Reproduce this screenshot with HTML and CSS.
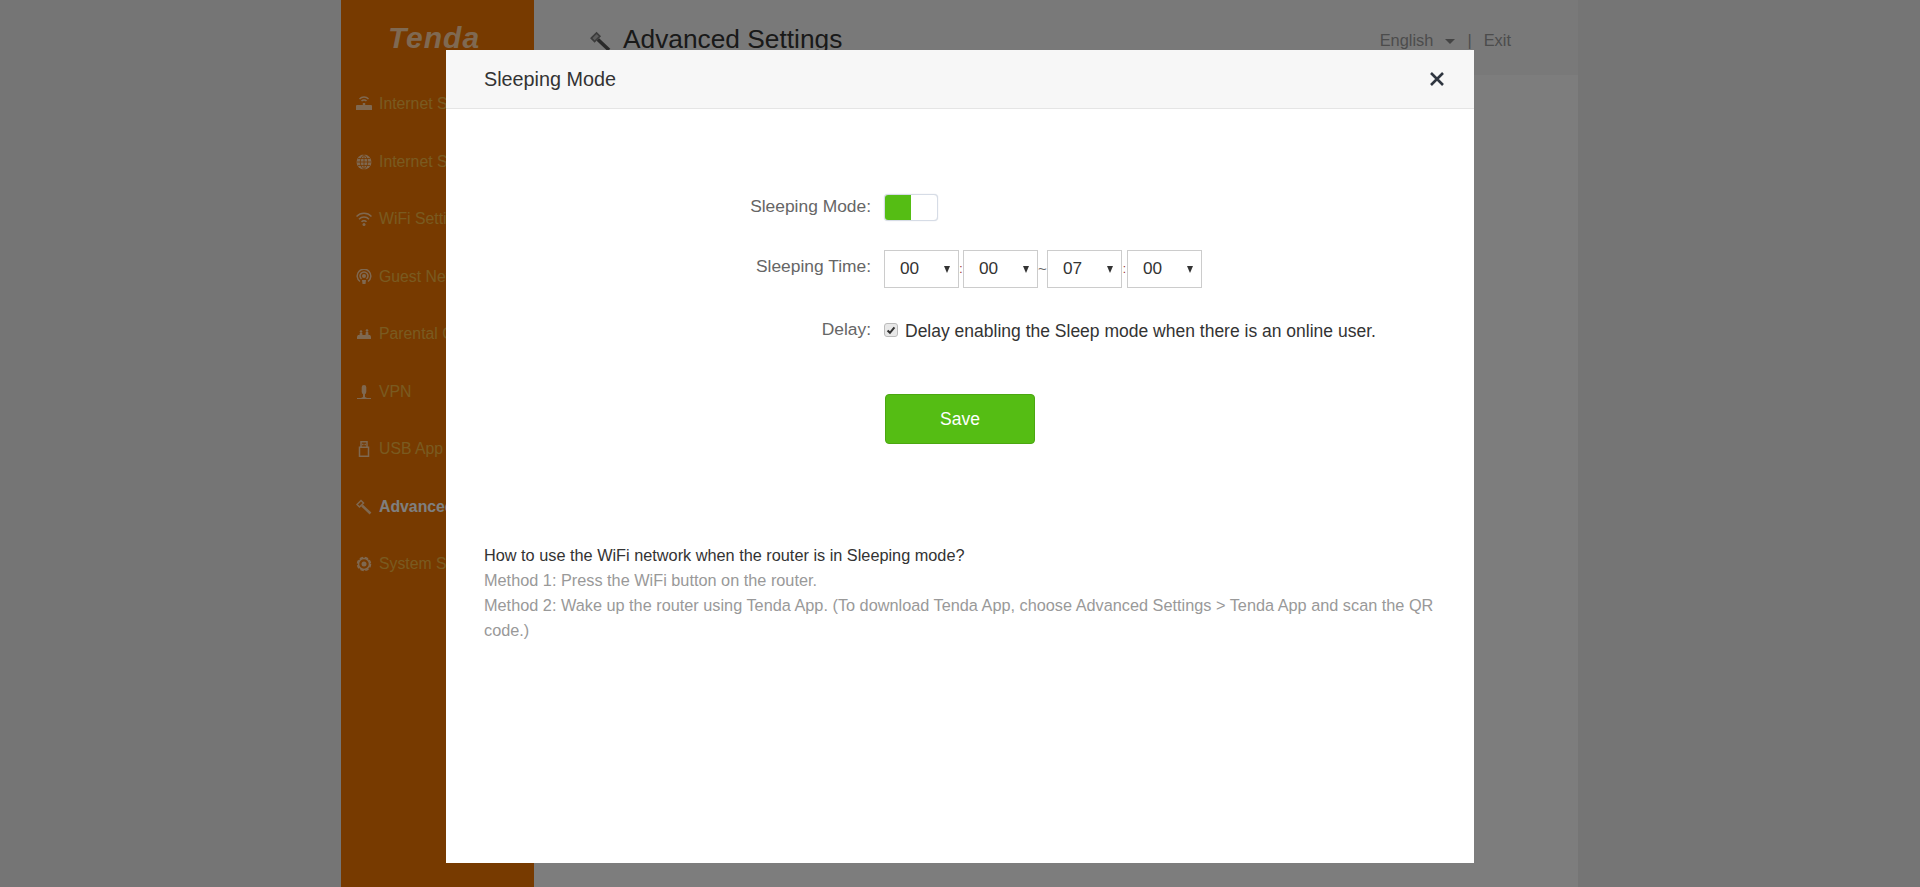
FILE: index.html
```html
<!DOCTYPE html>
<html lang="en">
<head>
  <meta charset="UTF-8">
  <title>Advanced Settings</title>
  <link rel="stylesheet" href="styles.css">
</head>
<body>

  <div class="page">
    <aside class="sidebar">
      <div class="logo">Tenda</div>
      <nav class="menu">
        <a class="menu-item">
          <svg class="menu-icon" viewBox="0 0 16 16"><path d="M1 9h5.800V7h2.400v2H15a1 1 0 0 1 1 1v4H0v-4a1 1 0 0 1 1-1z"/><path class="line" d="M5.500 5a3.500 3.500 0 0 1 5 0M3.500 3a6.300 6.300 0 0 1 9 0"/></svg>
          <span>Internet Status</span>
        </a>
        <a class="menu-item">
          <svg class="menu-icon" viewBox="0 0 16 16"><circle cx="8" cy="8" r="7.500"/><path class="cut" d="M.5 8h15M2 4.500h12M2 11.500h12M8 .5v15M8 .5c-5 4-5 11 0 15M8 .5c5 4 5 11 0 15"/></svg>
          <span>Internet Settings</span>
        </a>
        <a class="menu-item">
          <svg class="menu-icon" viewBox="0 0 16 16"><path class="line" d="M.5 5.500a10.500 10.500 0 0 1 15 0M3 8.200a7 7 0 0 1 10 0M5.500 10.800a3.500 3.500 0 0 1 5 0"/><circle cx="8" cy="13.500" r="1.500"/></svg>
          <span>WiFi Settings</span>
        </a>
        <a class="menu-item">
          <svg class="menu-icon" viewBox="0 0 16 16"><path class="line" d="M4 12.500a6.800 6.800 0 1 1 8 0M5.500 10a4 4 0 1 1 5 0"/><circle cx="8" cy="7" r="2"/><path d="M6 11h4l-.5 4h-3z"/></svg>
          <span>Guest Network</span>
        </a>
        <a class="menu-item">
          <svg class="menu-icon" viewBox="0 0 16 16"><path d="M2 9h12l1 1.500V13H1v-2.500z"/><circle cx="5" cy="5.500" r="1.300"/><circle cx="11" cy="4.500" r="1.300"/><path d="M3.500 9l.3-2h2.400l.3 2zM9.500 9l.3-3h2.400l.3 3z"/></svg>
          <span>Parental Control</span>
        </a>
        <a class="menu-item">
          <svg class="menu-icon" viewBox="0 0 16 16"><path d="M8 1a2.300 2.300 0 0 1 2.300 2.300V8a2.300 2.300 0 0 1-4.600 0V3.300A2.300 2.300 0 0 1 8 1zM7 10h2v3l2 1H5l2-1z"/><path d="M1 14h14v1H1z"/></svg>
          <span>VPN</span>
        </a>
        <a class="menu-item">
          <svg class="menu-icon" viewBox="0 0 16 16"><path class="line" d="M5 .8h6v5.500H5zM3.500 6.300h9v9h-9zM6.800 2.800v1.500M9.200 2.800v1.500"/></svg>
          <span>USB App</span>
        </a>
        <a class="menu-item is-active">
          <svg class="menu-icon" viewBox="0 0 16 16"><path class="line" d="M1 5.500L5 1.500l2.500 2.500-4 4z"/><path class="line-thick" d="M6 6.500l8.500 8"/></svg>
          <span>Advanced Settings</span>
        </a>
        <a class="menu-item">
          <svg class="menu-icon" viewBox="0 0 16 16"><circle class="line" cx="8" cy="8" r="6.500" stroke-dasharray="3.500 1.600"/><circle class="line" cx="8" cy="8" r="5.500"/><circle cx="8" cy="8" r="2.500"/></svg>
          <span>System Settings</span>
        </a>
      </nav>
    </aside>

    <main class="content">
      <header class="topbar">
        <h1 class="page-title">
          <svg class="title-icon" viewBox="0 0 16 16"><path class="head" d="M1 5.500L5 1.500l2.500 2.500-4 4z"/><path class="handle" d="M6 6.500l8.500 8"/></svg>
          Advanced Settings
        </h1>
        <div class="top-links">
          <span>English</span>
          <span class="caret"></span>
          <span class="divider">|</span>
          <span>Exit</span>
        </div>
      </header>
    </main>
  </div>

  <div class="scrim"></div>

  <section class="modal">
    <header class="modal-head">
      <h2 class="modal-title">Sleeping Mode</h2>
      <svg class="modal-close" viewBox="0 0 16 16"><path d="M2 2l12 12M14 2L2 14"/></svg>
    </header>

    <div class="modal-body">
      <form class="sleep-form">
        <div class="form-row row-toggle">
          <label class="form-label">Sleeping Mode:</label>
          <div class="toggle"><span class="toggle-on"></span><span class="toggle-off"></span></div>
        </div>

        <div class="form-row row-time">
          <label class="form-label">Sleeping Time:</label>
          <div class="time-fields">
            <div class="select-box"><select><option>00</option></select></div>
            <span class="sep sep-colon">:</span>
            <div class="select-box"><select><option>00</option></select></div>
            <span class="sep sep-tilde">~</span>
            <div class="select-box"><select><option>07</option></select></div>
            <span class="sep sep-colon">:</span>
            <div class="select-box"><select><option>00</option></select></div>
          </div>
        </div>

        <div class="form-row row-delay">
          <label class="form-label">Delay:</label>
          <label class="check-label">
            <span class="check">
              <svg viewBox="0 0 14 14"><path d="M3 7.500l2.800 2.800L11 4"/></svg>
            </span>
            <span class="check-text">Delay enabling the Sleep mode when there is an online user.</span>
          </label>
        </div>

        <div class="form-row row-save">
          <button class="btn-save" type="button">Save</button>
        </div>
      </form>

      <div class="help">
        <p class="help-title">How to use the WiFi network when the router is in Sleeping mode?</p>
        <p>Method 1: Press the WiFi button on the router.</p>
        <p>Method 2: Wake up the router using Tenda App. (To download Tenda App, choose Advanced Settings &gt; Tenda App and scan the QR code.)</p>
      </div>
    </div>
  </section>

</body>
</html>
```

FILE: styles.css
```css
html, body {
  margin: 0;
  padding: 0;
  height: 100%;
  overflow: hidden;
}

body {
  font-family: "Liberation Sans", Arial, sans-serif;
  background-color: #eaeaea;
  color: #333;
}

h1, h2, p {
  margin: 0;
  font-weight: normal;
}

/* page behind the dialog */
.page {
  display: flex;
  width: 1237px;
  height: 100%;
  margin-left: 341px;
}

.sidebar {
  width: 193px;
  flex-shrink: 0;
  background-color: #ee7400;
}

.logo {
  height: 75.500px;
  padding: 23px 7px 0 0;
  box-sizing: border-box;
  text-align: center;
  font-size: 30px;
  line-height: 30px;
  font-weight: bold;
  font-style: italic;
  letter-spacing: 1px;
  color: #ffd2a4;
}

.menu {
  display: flex;
  flex-direction: column;
}

.menu-item {
  display: flex;
  align-items: center;
  height: 57.500px;
  padding-left: 15px;
  font-size: 15.800px;
  color: #f4b440;
  white-space: nowrap;
}

.menu-item.is-active {
  font-weight: bold;
  color: #fff;
}

.menu-icon {
  width: 16px;
  height: 16px;
  margin-right: 7px;
  fill: #ffd0a0;
}

.menu-icon .line {
  fill: none;
  stroke: #ffd0a0;
  stroke-width: 1.500;
}

.menu-icon .line-thick {
  fill: none;
  stroke: #ffd0a0;
  stroke-width: 2.500;
}

.menu-icon .cut {
  fill: none;
  stroke: #ee7400;
  stroke-width: .8;
}

.content {
  flex: 1;
  background-color: #fbfbfb;
}

.topbar {
  display: flex;
  justify-content: space-between;
  height: 75px;
  padding: 21px 67px 0 56px;
  box-sizing: border-box;
  background-color: #f3f3f3;
}

.page-title {
  display: flex;
  align-items: center;
  gap: 12px;
  height: 36px;
  font-size: 26.300px;
  color: #333;
}

.title-icon {
  width: 21px;
  height: 21px;
  margin-top: 4px;
}

.title-icon .head {
  fill: #bbb;
  stroke: #777;
  stroke-width: 1.300;
}

.title-icon .handle {
  fill: none;
  stroke: #555;
  stroke-width: 2.800;
}

.top-links {
  display: flex;
  align-items: center;
  height: 38px;
  font-size: 16.400px;
  color: #999;
}

.caret {
  width: 0;
  height: 0;
  margin: 2px 12px 0 12px;
  border: 5px solid transparent;
  border-top: 5px solid #888;
  border-bottom: 0;
}

.divider {
  margin-right: 12px;
}

.scrim {
  position: absolute;
  top: 0;
  left: 0;
  right: 0;
  bottom: 0;
  background-color: rgba(0, 0, 0, .5);
}

/* dialog */
.modal {
  position: absolute;
  left: 446px;
  top: 50px;
  width: 1028px;
  height: 813px;
  background-color: #fff;
}

.modal-head {
  display: flex;
  align-items: center;
  justify-content: space-between;
  height: 58px;
  padding: 0 29px 0 38px;
  background-color: #f7f7f7;
  border-bottom: 1px solid #e5e5e5;
}

.modal-title {
  font-size: 19.800px;
  color: #333;
}

.modal-close {
  width: 16px;
  height: 16px;
  fill: none;
  stroke: #2f3640;
  stroke-width: 2.600;
}

.modal-body {
  padding: 0 29px 0 38px;
}

.sleep-form {
  padding-top: 85px;
}

.form-row {
  display: flex;
  align-items: center;
}

.form-label {
  width: 387px;
  flex-shrink: 0;
  margin-right: 13px;
  text-align: right;
  font-size: 17.400px;
  color: #666;
}

.row-toggle {
  height: 27px;
}

.row-toggle .form-label {
  padding-bottom: 2px;
}

.row-time {
  height: 38px;
  margin-top: 29px;
}

.row-time .form-label {
  padding-bottom: 5px;
}

.row-delay {
  height: 22px;
  margin-top: 31px;
}

.row-delay .form-label {
  padding-bottom: 1px;
}

.row-save {
  margin-top: 53px;
  padding-left: 401px;
}

.toggle {
  display: flex;
  width: 52px;
  height: 25px;
  border: 1px solid #d6dce6;
  border-radius: 4px;
  box-shadow: 0 0 1px #c5ccd8;
  overflow: hidden;
  background-color: #fff;
}

.toggle-on {
  width: 26px;
  background-color: #55bd14;
}

.toggle-off {
  flex: 1;
}

.time-fields {
  display: flex;
  align-items: center;
}

.select-box {
  position: relative;
  width: 75px;
  height: 38px;
}

.select-box::after {
  content: "";
  position: absolute;
  right: 9px;
  top: 16px;
  border: 3.500px solid transparent;
  border-top: 7px solid #333;
  border-bottom: 0;
  pointer-events: none;
}

.select-box select {
  width: 100%;
  height: 100%;
  padding: 0 0 2px 15px;
  appearance: none;
  border: 1px solid #ccc;
  border-radius: 0;
  background-color: #fff;
  font-family: inherit;
  font-size: 17.200px;
  color: #333;
}

.sep {
  text-align: center;
  font-size: 12px;
  line-height: 38px;
}

.sep-colon {
  width: 4px;
  color: #933;
}

.sep-tilde {
  width: 9px;
  font-size: 15px;
  color: #666;
}

.time-fields .sep-colon:last-of-type {
  width: 5px;
}

.check-label {
  display: flex;
  align-items: center;
  font-size: 17.500px;
  color: #333;
}

.check-text {
  padding-top: 2px;
}

.check {
  display: block;
  width: 14px;
  height: 14px;
  margin-right: 7px;
  box-sizing: border-box;
  border: 1px solid #bbb;
  border-radius: 3px;
  background-color: #e8e8e8;
}

.check svg {
  display: block;
  width: 12px;
  height: 12px;
  fill: none;
  stroke: #333;
  stroke-width: 2.400;
}

.btn-save {
  width: 150px;
  height: 50px;
  border: 1px solid #4ba711;
  border-radius: 4px;
  background-color: #55bd14;
  color: #fff;
  font-family: inherit;
  font-size: 17.500px;
  cursor: pointer;
}

.help {
  margin-top: 99px;
  font-size: 16.300px;
  line-height: 25px;
  color: #999;
}

.help-title {
  color: #333;
}
```
